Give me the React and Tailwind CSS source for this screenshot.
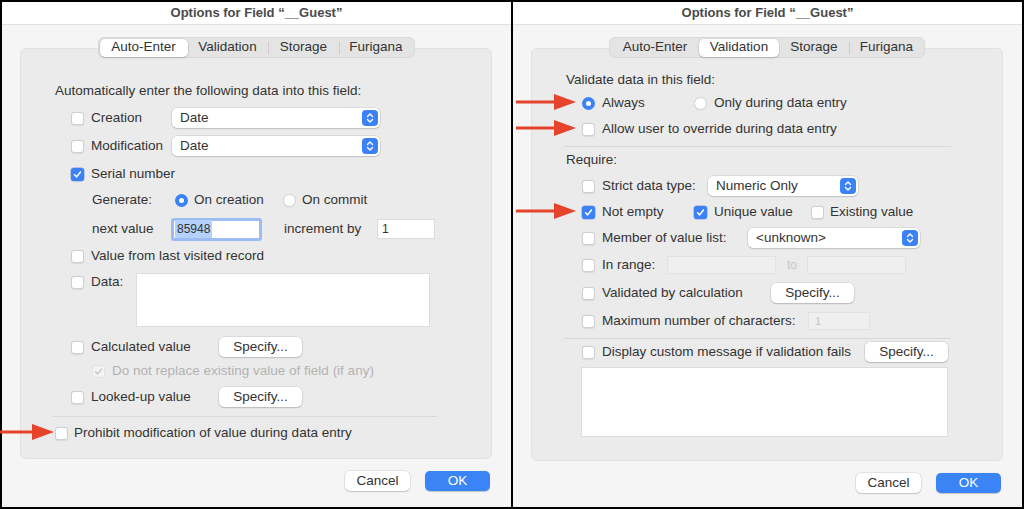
import React from "react";

const font = { fontFamily: '"Liberation Sans", Arial, sans-serif' };

function Check({ on, dim }) {
  if (dim) {
    return (
      <span className="w-[13px] h-[13px] rounded-[3px] border border-[#e2e2e2] bg-[#f3f3f3] flex items-center justify-center shrink-0">
        <svg width="11" height="11" viewBox="0 0 13 13"><path d="M3 6.8 L5.5 9.3 L10 3.6" fill="none" stroke="#c2c2c2" strokeWidth="1.6" strokeLinecap="round" strokeLinejoin="round" /></svg>
      </span>
    );
  }
  if (on) {
    return (
      <span className="w-[13px] h-[13px] rounded-[3px] bg-[#3a82f6] flex items-center justify-center shrink-0 shadow-[0_0_0_0.5px_rgba(30,90,200,0.5)]">
        <svg width="11" height="11" viewBox="0 0 13 13"><path d="M3 6.8 L5.5 9.3 L10 3.6" fill="none" stroke="white" strokeWidth="1.8" strokeLinecap="round" strokeLinejoin="round" /></svg>
      </span>
    );
  }
  return <span className="w-[13px] h-[13px] rounded-[3px] border border-[#cfcfcf] bg-white shrink-0 shadow-[0_0.5px_1px_rgba(0,0,0,0.08)]" />;
}

function Radio({ on }) {
  if (on) {
    return (
      <span className="w-[13px] h-[13px] rounded-full bg-[#3a82f6] flex items-center justify-center shrink-0">
        <span className="w-[5px] h-[5px] rounded-full bg-white" />
      </span>
    );
  }
  return <span className="w-[13px] h-[13px] rounded-full border border-[#d3d3d3] bg-white shrink-0 shadow-[0_0.5px_1px_rgba(0,0,0,0.08)]" />;
}

function Select({ w, text }) {
  return (
    <div className={`${w} h-[20px] bg-white rounded-[5px] shadow-[0_0_0_0.5px_rgba(0,0,0,0.14),0_1px_1.5px_rgba(0,0,0,0.12)] flex items-center justify-between pl-[8px] pr-[2px]`}>
      <span>{text}</span>
      <span className="w-[16px] h-[16px] rounded-[4px] bg-[#3a82f6] flex items-center justify-center">
        <svg width="10" height="12" viewBox="0 0 10 12">
          <path d="M2.5 4.5 L5 2 L7.5 4.5" fill="none" stroke="white" strokeWidth="1.4" strokeLinecap="round" strokeLinejoin="round" />
          <path d="M2.5 7.5 L5 10 L7.5 7.5" fill="none" stroke="white" strokeWidth="1.4" strokeLinecap="round" strokeLinejoin="round" />
        </svg>
      </span>
    </div>
  );
}

function Btn({ children, w = "w-[83px]", blue }) {
  return (
    <div
      className={
        blue
          ? `${w} h-[20px] rounded-[5px] bg-[#3b84f6] text-white flex items-center justify-center shadow-[0_0.5px_1px_rgba(0,0,0,0.2)]`
          : `${w} h-[20px] rounded-[5px] bg-white text-[#333333] flex items-center justify-center shadow-[0_0_0_0.5px_rgba(0,0,0,0.14),0_1px_1.5px_rgba(0,0,0,0.14)]`
      }
    >
      {children}
    </div>
  );
}

function Tabs({ active }) {
  const tabs = [
    ["Auto-Enter", "w-[88px]"],
    ["Validation", "w-[80px]"],
    ["Storage", "w-[70px]"],
    ["Furigana", "w-[73px]"],
  ];
  return (
    <div className="flex justify-center -mb-[10px] relative z-10">
      <div className="flex items-center h-[21px] rounded-[6px] bg-[#e4e4e4] border border-[#d9d9d9] p-[1px]">
        {tabs.map(([t, w], i) => (
          <React.Fragment key={t}>
            {i > 0 && i !== active && i - 1 !== active && <span className="w-px h-[12px] bg-[#cdcdcd]" />}
            <div
              className={`${w} h-[18px] flex items-center justify-center rounded-[5px] ${
                i === active ? "bg-white shadow-[0_0_0_0.5px_rgba(0,0,0,0.1),0_1px_2px_rgba(0,0,0,0.15)]" : ""
              }`}
            >
              {t}
            </div>
          </React.Fragment>
        ))}
      </div>
    </div>
  );
}

function Dialog({ active, panelH, children }) {
  return (
    <div className="w-[509px] h-full flex flex-col bg-[#f5f5f5]">
      <div className="h-[23px] bg-white border-b border-[#e0e0e0] flex items-center justify-center text-[13px] font-bold text-[#4a4a4a]">
        Options for Field “__Guest”
      </div>
      <div className="pt-[12px] pl-[18px] pr-[19px]">
        <Tabs active={active} />
        <div className={`${panelH} rounded-[6px] bg-[#ebebeb] border border-[#e1e1e1] flex flex-col`}>{children}</div>
        <div className="flex justify-end gap-[15px] mt-[12px] pr-[2px]">
          <Btn w="w-[65px]">Cancel</Btn>
          <Btn w="w-[65px]" blue>
            OK
          </Btn>
        </div>
      </div>
    </div>
  );
}

function Row({ className = "", children }) {
  return <div className={`flex items-center whitespace-nowrap ${className}`}>{children}</div>;
}

function AutoEnter() {
  return (
    <Dialog active={0} panelH="h-[411px]">
      <Row className="h-[20px] mt-[32px] pl-[34px]">Automatically enter the following data into this field:</Row>
      <Row className="h-[22px] mt-[6px] pl-[50px]">
        <Check />
        <span className="ml-[7px] w-[81px]">Creation</span>
        <Select w="w-[208px]" text="Date" />
      </Row>
      <Row className="h-[22px] mt-[6px] pl-[50px]">
        <Check />
        <span className="ml-[7px] w-[81px]">Modification</span>
        <Select w="w-[208px]" text="Date" />
      </Row>
      <Row className="h-[22px] mt-[6px] pl-[50px]">
        <Check on />
        <span className="ml-[7px]">Serial number</span>
      </Row>
      <Row className="h-[22px] mt-[4px] pl-[71px]">
        <span className="w-[83px]">Generate:</span>
        <Radio on />
        <span className="ml-[6px] w-[89px]">On creation</span>
        <Radio />
        <span className="ml-[6px]">On commit</span>
      </Row>
      <Row className="h-[24px] mt-[6px] pl-[71px]">
        <span className="w-[79px]">next value</span>
        <div className="w-[91px] h-[23px] bg-white border-[3px] border-[#9cbdf3] rounded-[3px] flex items-center pl-[1px]">
          <span className="bg-[#b4d2fb] text-[12px] px-[2px]">85948</span>
        </div>
        <span className="ml-[22px] w-[93px]">increment by</span>
        <div className="w-[58px] h-[20px] bg-white border border-[#dcdcdc] flex items-center pl-[4px] text-[12px]">1</div>
      </Row>
      <Row className="h-[22px] mt-[4px] pl-[50px]">
        <Check />
        <span className="ml-[7px]">Value from last visited record</span>
      </Row>
      <div className="flex items-start h-[54px] mt-[6px] pl-[50px]">
        <Row className="h-[18px]">
          <Check />
          <span className="ml-[7px] w-[45px]">Data:</span>
        </Row>
        <div className="w-[294px] h-[54px] bg-white border border-[#dddddd]" />
      </div>
      <Row className="h-[22px] mt-[9px] pl-[50px]">
        <Check />
        <span className="ml-[7px] w-[128px]">Calculated value</span>
        <Btn>Specify...</Btn>
      </Row>
      <Row className="h-[20px] mt-[3px] pl-[71px] text-[#b3b3b3]">
        <Check dim />
        <span className="ml-[7px]">Do not replace existing value of field (if any)</span>
      </Row>
      <Row className="h-[22px] mt-[5px] pl-[50px]">
        <Check />
        <span className="ml-[7px] w-[128px]">Looked-up value</span>
        <Btn>Specify...</Btn>
      </Row>
      <div className="h-px w-[384px] ml-[32px] mt-[8px] bg-[#d8d8d8]" />
      <Row className="h-[20px] mt-[6px] pl-[34px]">
        <Check />
        <span className="ml-[6px]">Prohibit modification of value during data entry</span>
      </Row>
    </Dialog>
  );
}

function Validation() {
  return (
    <Dialog active={1} panelH="h-[413px]">
      <Row className="h-[18px] mt-[22px] pl-[34px]">Validate data in this field:</Row>
      <Row className="h-[20px] mt-[4px] pl-[50px]">
        <Radio on />
        <span className="ml-[7px] w-[92px]">Always</span>
        <Radio />
        <span className="ml-[7px]">Only during data entry</span>
      </Row>
      <Row className="h-[20px] mt-[6px] pl-[50px]">
        <Check />
        <span className="ml-[7px]">Allow user to override during data entry</span>
      </Row>
      <div className="h-px w-[387px] ml-[32px] mt-[7px] bg-[#d8d8d8]" />
      <Row className="h-[18px] mt-[4px] pl-[34px]">Require:</Row>
      <Row className="h-[20px] mt-[7px] pl-[50px]">
        <Check />
        <span className="ml-[7px] w-[106px]">Strict data type:</span>
        <Select w="w-[150px]" text="Numeric Only" />
      </Row>
      <Row className="h-[20px] mt-[6px] pl-[50px]">
        <Check on />
        <span className="ml-[7px] w-[92px]">Not empty</span>
        <Check on />
        <span className="ml-[7px] w-[97px]">Unique value</span>
        <Check />
        <span className="ml-[6px]">Existing value</span>
      </Row>
      <Row className="h-[20px] mt-[6px] pl-[50px]">
        <Check />
        <span className="ml-[7px] w-[146px]">Member of value list:</span>
        <Select w="w-[172px]" text="<unknown>" />
      </Row>
      <Row className="h-[20px] mt-[7px] pl-[50px]">
        <Check />
        <span className="ml-[7px] w-[65px]">In range:</span>
        <div className="w-[109px] h-[18px] bg-[#efefef] border border-[#e2e2e2]" />
        <span className="ml-[11px] w-[20px] text-[12px] text-[#c4c4c4]">to</span>
        <div className="w-[99px] h-[18px] bg-[#efefef] border border-[#e2e2e2]" />
      </Row>
      <Row className="h-[20px] mt-[8px] pl-[50px]">
        <Check />
        <span className="ml-[7px] w-[169px]">Validated by calculation</span>
        <Btn>Specify...</Btn>
      </Row>
      <Row className="h-[20px] mt-[8px] pl-[50px]">
        <Check />
        <span className="ml-[7px] w-[206px]">Maximum number of characters:</span>
        <div className="w-[62px] h-[18px] bg-[#efefef] border border-[#e2e2e2] flex items-center pl-[6px] text-[11px] text-[#c4c4c4]">1</div>
      </Row>
      <div className="h-px w-[387px] ml-[32px] mt-[7px] bg-[#d8d8d8]" />
      <Row className="h-[20px] mt-[3px] pl-[50px]">
        <Check />
        <span className="ml-[7px] w-[263px]">Display custom message if validation fails</span>
        <Btn>Specify...</Btn>
      </Row>
      <div className="w-[367px] h-[70px] ml-[49px] mt-[5px] bg-white border border-[#dddddd]" />
    </Dialog>
  );
}

function Arrow({ className }) {
  return (
    <svg className={`absolute ${className}`} width="60" height="18" viewBox="0 0 60 18">
      <rect x="0" y="7.5" width="42" height="3" fill="#e5432b" />
      <path d="M38 1 L60 9 L38 17 Z" fill="#e5432b" />
    </svg>
  );
}

export default function App() {
  return (
    <div className="relative w-[1024px] h-[509px] border-2 border-black flex bg-white text-[13.5px] text-[#333333]" style={font}>
      <AutoEnter />
      <div className="w-[2px] h-full bg-black" />
      <Validation />
      <Arrow className="left-[-8px] top-[421px]" />
      <Arrow className="left-[514px] top-[91px]" />
      <Arrow className="left-[514px] top-[117px]" />
      <Arrow className="left-[514px] top-[200px]" />
    </div>
  );
}
